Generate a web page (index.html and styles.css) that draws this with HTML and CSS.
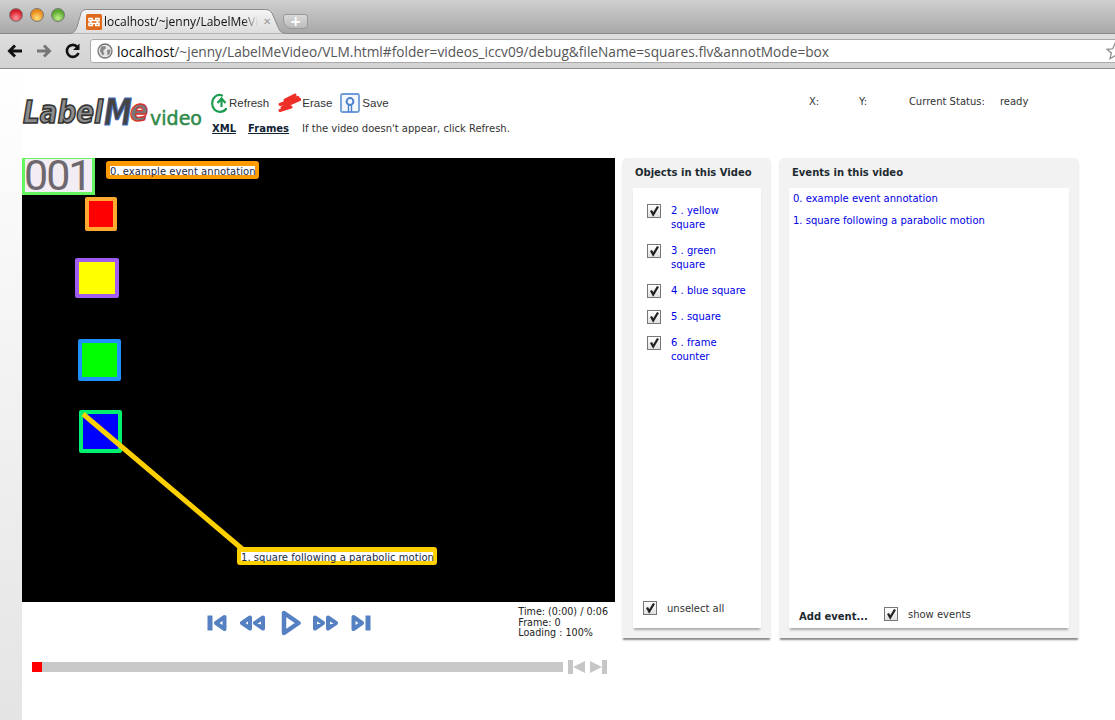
FILE: index.html
```html
<!DOCTYPE html>
<html lang="en">
<head>
<meta charset="utf-8">
<title>LabelMe Video</title>
<link rel="stylesheet" href="styles.css">
</head>
<body>
<header class="chrome">
  <div class="tabbar">
    <div class="lights">
      <span class="light red"></span><span class="light orange"></span><span class="light green"></span>
    </div>
    <div class="tab">
      <svg class="tab-shape" viewBox="0 0 220 25">
        <defs><linearGradient id="tabfill" x1="0" y1="0" x2="0" y2="1"><stop offset="0" stop-color="#f4f4f4"/><stop offset="1" stop-color="#dcdcdc"/></linearGradient></defs>
        <path d="M0 24.500C5 24.500 7 23 9 18L13 4Q14 .5 18 .5H198Q202 .5 204 4L210 18C212 23 214 24.500 220 24.500V25H0z" fill="url(#tabfill)" stroke="#8c8c8c"/>
      </svg>
      <svg class="favicon" viewBox="0 0 16 16"><rect width="16" height="16" rx="1.500" fill="#dd6a1d"/><path d="M3 4.500h3.200v2h3.600v-2H13v2.200h-1.800v2.600H13v2.200H9.800v-2H6.200v2H3V9.300h1.800V6.700H3z" fill="none" stroke="#fff" stroke-width="1.500"/></svg>
      <span class="tab-title">localhost/~jenny/LabelMeVid</span>
      <span class="tab-close">✕</span>
    </div>
    <div class="newtab">+</div>
  </div>
  <div class="toolbar">
    <svg class="nav" viewBox="0 0 18 18"><path d="M16 9H4M9 3.500 3.500 9 9 14.500" fill="none" stroke="#111" stroke-width="3"/></svg>
    <svg class="nav" viewBox="0 0 18 18"><path d="M2 9h12M9 3.500 14.500 9 9 14.500" fill="none" stroke="#777" stroke-width="3"/></svg>
    <svg class="nav" viewBox="0 0 18 18"><path d="M14.500 11a6 6 0 1 1-1-6" fill="none" stroke="#111" stroke-width="2.600"/><path d="M15.500 1.500v6.500H9z" fill="#111"/></svg>
    <div class="omnibox">
      <svg class="globe" viewBox="0 0 16 16"><circle cx="8" cy="8" r="7" fill="#e4e4e4" stroke="#777" stroke-width="1.300"/><path d="M4 3.500 8 3l1 2-3 3 1.500 3-2 1.500L3 8zM10 7l3.500-.5-.5 4-2.500 2z" fill="#888"/></svg>
      <span class="url"><span class="host">localhost</span>/~jenny/LabelMeVideo/VLM.html#folder=videos_iccv09/debug&amp;fileName=squares.flv&amp;annotMode=box</span>
      <svg class="star" viewBox="0 0 18 18"><path d="M9 1.500 11.200 6.800 17 7.300 12.600 11 14 16.700 9 13.700 4 16.700 5.400 11 1 7.300 6.800 6.800z" fill="#fff" stroke="#888" stroke-width="1.200"/></svg>
    </div>
  </div>
</header>

<main class="page">
  <section class="topbar">
    <svg class="logo" viewBox="0 0 182 44">
      <text class="logo-label" x="1" y="30" textLength="80" lengthAdjust="spacingAndGlyphs">Label</text>
      <text class="logo-m" x="82" y="32" textLength="28" lengthAdjust="spacingAndGlyphs">M</text>
      <text class="logo-e" x="108" y="28" textLength="18" lengthAdjust="spacingAndGlyphs">e</text>
      <text class="logo-video" x="128" y="32" textLength="52" lengthAdjust="spacingAndGlyphs">video</text>
    </svg>
    <div class="toolgroup">
      <div class="tools">
        <span class="tool"><svg class="tool-icon refresh" viewBox="0 0 18 20"><path d="M11 2.500C6 .5 1.200 4.500 1.200 10.500 1.200 15.500 4.500 18.800 9 18.800 11.500 18.800 13.500 18 15 16" fill="none" stroke="#1e9c50" stroke-width="2.200" stroke-linecap="round"/><path d="M6.500 10 10.500 5.500 14.500 10M10.500 6.500V14" fill="none" stroke="#1e9c50" stroke-width="2.200"/></svg>Refresh</span>
        <span class="tool"><svg class="tool-icon erase" viewBox="0 0 24 20"><path d="M3 17.500 14 14 5 14.500 23 6.500 3 11.500 21 4.500 8 7 18 2" fill="none" stroke="#ee2f28" stroke-width="3" stroke-linejoin="round" stroke-linecap="round"/></svg>Erase</span>
        <span class="tool"><svg class="tool-icon save" viewBox="0 0 20 20"><rect x="1" y="1" width="18" height="18" rx="1.500" fill="#f4f8fd" stroke="#6f9bd8" stroke-width="1.800"/><circle cx="10" cy="8.500" r="3.400" fill="none" stroke="#4f82cc" stroke-width="2"/><path d="M8.500 11.500V19M11.500 11.500V19" stroke="#4f82cc" stroke-width="1.400"/></svg>Save</span>
      </div>
      <div class="links">
        <a class="link" href="#">XML</a>
        <a class="link" href="#">Frames</a>
        <span class="hint">If the video doesn't appear, click Refresh.</span>
      </div>
    </div>
    <div class="status">
      <span class="coord">X:</span><span class="coord">Y:</span><span class="status-label">Current Status:</span><span>ready</span>
    </div>
  </section>

  <section class="workspace">
    <div class="player">
      <div class="video">
        <div class="counter">001</div>
        <div class="event-tag orange-tag"><span>0. example event annotation</span></div>
        <div class="sq sq-red"></div>
        <div class="sq sq-yellow"></div>
        <div class="sq sq-green"></div>
        <div class="sq sq-blue"></div>
        <svg class="trail" viewBox="0 0 593 444"><path d="M61 256 225 395" stroke="#ffd000" stroke-width="5" fill="none"/></svg>
        <div class="event-tag yellow-tag"><span>1. square following a parabolic motion</span></div>
      </div>
      <div class="controls">
        <div class="buttons">
          <svg class="btn" width="20" height="18" viewBox="0 0 20 18"><path d="M3 1.500v15" fill="none" stroke="#5581c2" stroke-width="5"/><path d="M17.500 3 9 9l8.500 6z" fill="none" stroke="#5581c2" stroke-width="4" stroke-linejoin="round"/></svg>
          <svg class="btn" width="28" height="18" viewBox="0 0 28 18"><path d="M12 3.500 4 9l8 5.500zM25 3.500 17 9l8 5.500z" fill="none" stroke="#5581c2" stroke-width="4" stroke-linejoin="round"/></svg>
          <svg class="btn btn-play" width="20" height="26" viewBox="0 0 20 26"><path d="M3 3v20L17.500 13z" fill="none" stroke="#5581c2" stroke-width="4.500" stroke-linejoin="round"/></svg>
          <svg class="btn" width="28" height="18" viewBox="0 0 28 18"><path d="M3 3.500 11 9l-8 5.500zM16 3.500 24 9l-8 5.500z" fill="none" stroke="#5581c2" stroke-width="4" stroke-linejoin="round"/></svg>
          <svg class="btn" width="20" height="18" viewBox="0 0 20 18"><path d="M17 1.500v15" fill="none" stroke="#5581c2" stroke-width="5"/><path d="M2.500 3 11 9l-8.500 6z" fill="none" stroke="#5581c2" stroke-width="4" stroke-linejoin="round"/></svg>
        </div>
        <div class="timeinfo">Time: (0:00) / 0:06<br>Frame: 0<br>Loading : 100%</div>
      </div>
      <div class="scrub">
        <div class="track"><div class="thumb"></div></div>
        <svg class="step" width="17" height="14" viewBox="0 0 17 14"><path d="M2.500 0v14" stroke="#c6c6c6" stroke-width="5"/><path d="M17 1v12L5 7z" fill="#c6c6c6"/></svg>
        <svg class="step" width="17" height="14" viewBox="0 0 17 14"><path d="M14.500 0v14" stroke="#c6c6c6" stroke-width="5"/><path d="M0 1v12L12 7z" fill="#c6c6c6"/></svg>
      </div>
    </div>

    <aside class="panel objects">
      <h2 class="panel-title">Objects in this Video</h2>
      <div class="panel-body objects-body">
        <ul class="object-list">
          <li class="object"><span class="check"><svg class="tick" viewBox="0 0 12 12"><path d="M3 5.500 5.200 9.500 10 1.500" fill="none" stroke="#222" stroke-width="2.300"/></svg></span><a class="item" href="#">2 . yellow square</a></li>
          <li class="object"><span class="check"><svg class="tick" viewBox="0 0 12 12"><path d="M3 5.500 5.200 9.500 10 1.500" fill="none" stroke="#222" stroke-width="2.300"/></svg></span><a class="item" href="#">3 . green square</a></li>
          <li class="object"><span class="check"><svg class="tick" viewBox="0 0 12 12"><path d="M3 5.500 5.200 9.500 10 1.500" fill="none" stroke="#222" stroke-width="2.300"/></svg></span><a class="item" href="#">4 . blue square</a></li>
          <li class="object"><span class="check"><svg class="tick" viewBox="0 0 12 12"><path d="M3 5.500 5.200 9.500 10 1.500" fill="none" stroke="#222" stroke-width="2.300"/></svg></span><a class="item" href="#">5 . square</a></li>
          <li class="object"><span class="check"><svg class="tick" viewBox="0 0 12 12"><path d="M3 5.500 5.200 9.500 10 1.500" fill="none" stroke="#222" stroke-width="2.300"/></svg></span><a class="item" href="#">6 . frame counter</a></li>
        </ul>
        <div class="unselect"><span class="check"><svg class="tick" viewBox="0 0 12 12"><path d="M3 5.500 5.200 9.500 10 1.500" fill="none" stroke="#222" stroke-width="2.300"/></svg></span><span>unselect all</span></div>
      </div>
    </aside>

    <aside class="panel events">
      <h2 class="panel-title">Events in this video</h2>
      <div class="panel-body events-body">
        <ul class="event-list">
          <li class="event"><a class="item" href="#">0. example event annotation</a></li>
          <li class="event"><a class="item" href="#">1. square following a parabolic motion</a></li>
        </ul>
        <div class="event-foot"><strong class="add">Add event...</strong><span class="check"><svg class="tick" viewBox="0 0 12 12"><path d="M3 5.500 5.200 9.500 10 1.500" fill="none" stroke="#222" stroke-width="2.300"/></svg></span><span>show events</span></div>
      </div>
    </aside>
  </section>
</main>
</body>
</html>
```

FILE: styles.css
```css
* { box-sizing: border-box; }
html, body { margin: 0; height: 100%; overflow: hidden; }
body { font-family: "DejaVu Sans", Verdana, sans-serif; font-size: 10px; color: #222; background: #fff; width: 1115px; height: 720px; }
ul { list-style: none; margin: 0; padding: 0; }
a { color: inherit; text-decoration: none; }

.chrome { height: 69px; overflow: hidden; width: 1115px; }
.tabbar { height: 34px; display: flex; align-items: flex-end; background: linear-gradient(#d0d0d0, #a8a8a8); border-bottom: 1px solid #888; padding-left: 9px; }
.lights { display: flex; gap: 7px; align-self: flex-start; margin-top: 8px; width: 59px; flex: none; }
.light { width: 14px; height: 14px; border-radius: 50%; border: 1px solid #777; flex: none; }
.red { background: radial-gradient(circle at 50% 75%, #ff9a9a, #d81c2c 65%); }
.orange { background: radial-gradient(circle at 50% 75%, #ffe07a, #e88a1a 65%); }
.green { background: radial-gradient(circle at 50% 75%, #c4f08a, #58a830 65%); }
.tab { position: relative; width: 220px; height: 25px; margin-bottom: -1px; display: flex; align-items: center; padding: 0 0 0 18px; flex: none; }
.tab-shape { position: absolute; left: 0; top: 0; width: 220px; height: 25px; }
.favicon { position: relative; width: 16px; height: 16px; flex: none; margin-top: 1px; }
.tab-title { position: relative; font-family: "Open Sans", sans-serif; font-size: 12px; margin-left: 2px; width: 154px; overflow: hidden; white-space: nowrap; color: #111; -webkit-mask-image: linear-gradient(90deg, #000 90%, transparent); mask-image: linear-gradient(90deg, #000 90%, transparent); }
.tab-close { position: relative; color: #999; font-size: 10px; font-weight: bold; margin-left: 5px; }
.newtab { position: relative; flex: none; width: 25px; height: 15px; margin-left: -5px; margin-bottom: 4px; border: 1px solid #999; border-radius: 3px 3px 4px 9px; background: linear-gradient(#d8d8d8, #bbb); color: #fff; font-size: 14px; font-weight: bold; line-height: 13px; text-align: center; }
.toolbar { height: 35px; display: flex; align-items: center; background: linear-gradient(#dedede, #d2d2d2); border-bottom: 1px solid #8f8f8f; padding-left: 6px; overflow: hidden; }
.nav { width: 18px; height: 18px; margin-right: 11px; flex: none; }
.omnibox { margin-left: -3px; width: 1050px; height: 24px; background: #fff; border: 1px solid #aaa; border-radius: 3px; display: flex; align-items: center; padding-left: 6px; flex: none; }
.globe { width: 16px; height: 16px; flex: none; }
.url { font-family: "Open Sans", sans-serif; font-size: 13.700px; color: #555; margin-left: 4px; white-space: nowrap; }
.host { color: #111; }
.star { width: 18px; height: 18px; margin-left: auto; margin-right: 15px; flex: none; }

.page { height: 651px; padding-left: 22px; background: linear-gradient(#fff, #e4e4e4) 0 0 / 22px 100% no-repeat; }
.topbar { height: 89px; display: flex; align-items: flex-start; padding-top: 24px; }
.logo { width: 182px; height: 44px; flex: none; }
.logo-label, .logo-m, .logo-e { font-family: "DejaVu Sans", sans-serif; font-weight: bold; font-style: italic; font-size: 32px; }
.logo-label { fill: #8c8c8c; stroke: #333; stroke-width: 1.700px; }
.logo-m { fill: #444; stroke: #3f6cc0; stroke-width: 1px; font-size: 38px; }
.logo-e { fill: #777; stroke: #d8322c; stroke-width: 1.300px; font-size: 30px; }
.logo-video { font-family: "DejaVu Sans", sans-serif; font-size: 20px; fill: #2f8a4a; stroke: #2f8a4a; stroke-width: 0.500px; }
.toolgroup { margin-left: 6px; flex: none; }
.tools { display: flex; gap: 8px; height: 22px; align-items: center; margin-top: -1px; }
.tool { display: flex; align-items: center; font-family: "Liberation Sans", Arial, sans-serif; font-size: 11.500px; color: #333; line-height: 18px; }
.tool-icon { height: 20px; flex: none; }
.refresh { width: 18px; margin-left: 1px; }
.erase { width: 24px; margin-right: 1px; }
.save { width: 20px; margin-right: 2px; }
.links { display: flex; align-items: baseline; margin-top: 9px; font-size: 10px; color: #333; white-space: nowrap; }
.link { font-weight: bold; color: #123; text-decoration: underline; margin-left: 2px; margin-right: 10px; }
.hint { margin-left: 3px; }
.status { display: flex; margin-left: 299px; margin-top: 3px; font-size: 10px; color: #333; white-space: nowrap; }
.coord { width: 50px; }
.status-label { width: 91px; }

.workspace { display: flex; align-items: flex-start; }
.player { width: 593px; flex: none; }
.video { position: relative; width: 593px; height: 444px; background: #000; overflow: hidden; }
.counter { position: absolute; left: 0; top: 0; width: 73px; height: 37px; border: 3px solid #66f560; border-top-width: 1px; background: #f2edf2; color: #6e686e; font-family: Roboto, "Liberation Sans", sans-serif; font-weight: 400; font-size: 43px; line-height: 33px; letter-spacing: -2px; text-indent: -1px; white-space: nowrap; overflow: hidden; }
.event-tag { position: absolute; height: 18px; border-radius: 3px; font-size: 10px; padding: 5px 4px 0; white-space: nowrap; z-index: 2; }
.event-tag span { background: #fff; color: #1a2a44; display: block; height: 9px; line-height: 11px; letter-spacing: 0.03px; }
.orange-tag { left: 84px; top: 3px; width: 153px; background: #ff9a00; }
.yellow-tag { left: 215px; top: 389px; width: 200px; background: #ffd000; }
.sq { position: absolute; border: 4px solid; border-radius: 2px; }
.sq-red { left: 63px; top: 39px; width: 32px; height: 34px; background: #f00; border-color: #ffaa2e; }
.sq-yellow { left: 53px; top: 100px; width: 44px; height: 40px; background: #ff0; border-color: #a05cf0; }
.sq-green { left: 56px; top: 181px; width: 43px; height: 42px; background: #0f0; border-color: #1f90ff; }
.sq-blue { left: 57px; top: 252px; width: 43px; height: 43px; background: #00f; border-color: #00f070; }
.trail { position: absolute; left: 0; top: 0; width: 593px; height: 444px; }

.controls { height: 52px; position: relative; }
.buttons { display: flex; align-items: center; gap: 11px; margin-left: 185px; height: 42px; }
.btn { flex: none; }
.btn-play { margin: 0 0 0 4px; }
.timeinfo { position: absolute; right: 7px; top: 5px; font-size: 9.600px; line-height: 10.500px; color: #222; }
.scrub { display: flex; align-items: center; padding: 3px 0 0 10px; height: 23px; }
.track { width: 531px; height: 10px; background: #c8c8c8; flex: none; }
.thumb { width: 10px; height: 10px; background: #f00; }
.step { flex: none; margin-left: 5px; }

.panel { flex: none; height: 480px; background: #f2f2f2; border-radius: 5px 5px 0 0; box-shadow: 0 3px 2px -1px #888; padding: 0 10px 10px; display: flex; flex-direction: column; }
.objects { width: 149px; margin-left: 7px; padding-left: 11px; }
.events { width: 300px; margin-left: 8px; }
.panel-title { margin: 0; height: 30px; line-height: 29px; font-size: 10px; font-weight: bold; color: #1d2a30; padding-left: 3px; white-space: nowrap; }
.objects .panel-title { padding-left: 2px; }
.panel-body { flex: 1; background: #fff; box-shadow: 0 3px 2px -1px #aaa; display: flex; flex-direction: column; justify-content: space-between; }
.object-list { padding: 16px 0 0 14px; }
.object { display: flex; min-height: 14px; margin-bottom: 12px; }
.check { flex: none; display: block; width: 14px; height: 14px; border: 1px solid #777; background: linear-gradient(#fff, #e0e0e0); margin-right: 10px; }
.tick { display: block; width: 12px; height: 12px; }
.item { color: #0000e6; font-size: 10px; line-height: 14px; }
.object .item { width: 80px; }
.unselect { display: flex; align-items: center; padding: 0 0 13px 10px; color: #333; font-size: 10px; }
.event-list { padding: 4px 0 0 4px; }
.event { margin-bottom: 8px; }
.event-foot { display: flex; align-items: center; padding: 0 0 6px 10px; font-size: 10px; color: #333; }
.add { margin-right: 16px; color: #1d2a30; font-size: 10px; margin-top: 5px; }
```
